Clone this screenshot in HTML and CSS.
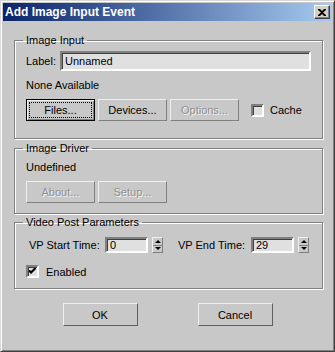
FILE: index.html
```html
<!DOCTYPE html>
<html lang="en">
<head>
    <meta charset="UTF-8">
    <title>Add Image Input Event</title>
    <link rel="stylesheet" href="styles.css">
</head>
<body>

    <div class="window">
        <div class="titlebar">
            <span class="title">Add Image Input Event</span>
            <span class="close">
                <svg width="8" height="7" viewBox="0 0 8 7">
                    <path d="M0 0h2l2 2 2-2h2v1L5 3.5 8 6v1H6L4 5 2 7H0V6l3-2.5L0 1z" fill="#000"/>
                </svg>
            </span>
        </div>

        <div class="content">
            <!-- Image Input -->
            <fieldset class="group group-input">
                <legend>Image Input</legend>
                <div class="label-row">
                    <span class="label-text">Label:</span>
                    <div class="field wide">Unnamed</div>
                </div>
                <div class="note note-first">None Available</div>
                <div class="btn-row">
                    <button class="btn default"><span class="focus">Files...</span></button>
                    <button class="btn">Devices...</button>
                    <button class="btn" disabled>Options...</button>
                    <span class="check check-cache"><span class="box"></span>Cache</span>
                </div>
            </fieldset>

            <!-- Image Driver -->
            <fieldset class="group group-driver">
                <legend>Image Driver</legend>
                <div class="note note-driver">Undefined</div>
                <div class="btn-row">
                    <button class="btn" disabled>About...</button>
                    <button class="btn" disabled>Setup...</button>
                </div>
            </fieldset>

            <!-- Video Post Parameters -->
            <fieldset class="group group-vp">
                <legend>Video Post Parameters</legend>
                <div class="spin-row">
                    <span class="spin-label start">VP Start Time:</span>
                    <div class="field spin">0</div>
                    <span class="arrows">
                        <span class="arrow up"></span>
                        <span class="arrow down"></span>
                    </span>
                    <span class="spin-label end">VP End Time:</span>
                    <div class="field spin">29</div>
                    <span class="arrows">
                        <span class="arrow up"></span>
                        <span class="arrow down"></span>
                    </span>
                </div>
                <div class="check check-enabled">
                    <span class="box">
                        <svg width="7" height="7" viewBox="0 0 7 7">
                            <path d="M0 2h1l1 1 4-4h1v2L2 6 0 4z" fill="#000"/>
                        </svg>
                    </span>Enabled
                </div>
            </fieldset>
        </div>

        <div class="actions">
            <button class="btn action">OK</button>
            <button class="btn action">Cancel</button>
        </div>
    </div>

</body>
</html>
```

FILE: styles.css
```css
body {
    margin: 0;
    font-family: "Liberation Sans", Arial, sans-serif;
    font-size: 11px;
    color: #000;
    background-color: #c8c8c8;
}
.window {
    width: 335px;
    height: 352px;
    box-sizing: border-box;
    padding: 2px;
    border: 1px solid;
    border-color: #d8d8d8 #404040 #404040 #d8d8d8;
    box-shadow: inset 1px 1px 0 #fff, inset -1px -1px 0 #808080;
    background-color: #c8c8c8;
}
.titlebar {
    height: 18px;
    display: flex;
    align-items: center;
    justify-content: space-between;
    padding: 0 2px;
    background: linear-gradient(to right, #0a246a, #a6caf0);
}
.title {
    color: #fff;
    font-weight: bold;
    font-size: 12px;
    line-height: 18px;
}
.close {
    width: 14px;
    height: 12px;
    display: flex;
    align-items: center;
    justify-content: center;
    background-color: #d4d0c8;
    border: 1px solid;
    border-color: #fff #404040 #404040 #fff;
    box-shadow: inset -1px -1px 0 #808080;
}
.content {
    padding: 13px 9px 0 11px;
}
.group {
    margin: 0;
    padding: 0 11px;
    min-inline-size: 0;
    border: 1px solid #808080;
    box-shadow: 1px 1px 0 #fff, inset 1px 1px 0 #fff;
}
.group legend {
    padding: 0 3px;
    margin-left: -3px;
    line-height: 13px;
}
.group-input { padding-bottom: 17px; }
.group-driver { margin-top: 3px; padding-bottom: 10px; }
.group-vp { margin-top: 2px; padding-bottom: 10px; }

.label-row {
    display: flex;
    align-items: center;
    height: 20px;
    margin-top: 4px;
}
.label-text { width: 34px; }
.field {
    box-sizing: border-box;
    background-color: #e0e0e0;
    border: 2px solid;
    border-color: #808080 #fff #fff #808080;
    box-shadow: inset 1px 1px 0 #404040;
    padding-left: 3px;
    line-height: 13px;
}
.wide {
    flex: 1;
    height: 20px;
    line-height: 16px;
}
.note { line-height: 13px; }
.note-first { margin-top: 8px; }
.note-driver { margin-top: 6px; }

.btn-row {
    display: flex;
    align-items: center;
    gap: 3px;
    margin-top: 7px;
}
.btn {
    box-sizing: border-box;
    width: 69px;
    height: 22px;
    padding: 0;
    font-family: "Liberation Sans", Arial, sans-serif;
    font-size: 11px;
    color: #000;
    background-color: #c8c8c8;
    border: 1px solid;
    border-color: #f0f0f0 #808080 #808080 #f0f0f0;
}
.btn:disabled {
    color: #909090;
    text-shadow: 1px 1px 0 #f4f4f4;
}
.btn.default {
    border: 1px solid #000;
    box-shadow: inset 1px 1px 0 #f0f0f0, inset -1px -1px 0 #808080;
    display: flex;
    padding: 2px;
}
.focus {
    flex: 1;
    display: flex;
    align-items: center;
    justify-content: center;
    border: 1px dotted #000;
}

.check {
    display: flex;
    align-items: center;
    gap: 6px;
}
.check-cache { margin-left: 9px; }
.check-enabled {
    margin-top: 12px;
    height: 13px;
    gap: 7px;
}
.box {
    box-sizing: border-box;
    width: 13px;
    height: 13px;
    display: flex;
    align-items: center;
    justify-content: center;
    background-color: #e0e0e0;
    border: 2px solid;
    border-color: #808080 #fff #fff #808080;
    box-shadow: inset 1px 1px 0 #404040;
}

.spin-row {
    display: flex;
    align-items: center;
    margin-top: 8px;
    height: 16px;
}
.spin-label {
    flex-shrink: 0;
    white-space: nowrap;
}
.spin-label.start { margin-left: 3px; width: 76px; }
.spin-label.end { margin-left: 15px; width: 73px; }
.spin {
    flex-shrink: 0;
    width: 43px;
    height: 16px;
}
.arrows {
    flex-shrink: 0;
    box-sizing: border-box;
    width: 11px;
    height: 16px;
    margin-left: 4px;
    display: flex;
    flex-direction: column;
    border: 1px solid;
    border-color: #f0f0f0 #808080 #808080 #f0f0f0;
}
.arrow {
    flex: 1;
    display: flex;
    align-items: center;
    justify-content: center;
}
.arrow.up { border-bottom: 1px solid #808080; }
.arrow.up::before {
    content: "";
    border: 3px solid transparent;
    border-top: 0;
    border-bottom: 3px solid #000;
}
.arrow.down::before {
    content: "";
    border: 3px solid transparent;
    border-bottom: 0;
    border-top: 3px solid #000;
}

.actions {
    display: flex;
    justify-content: center;
    gap: 60px;
    margin-top: 14px;
}
.btn.action {
    width: 75px;
    height: 23px;
    border-color: #f0f0f0 #606060 #606060 #f0f0f0;
}
```
